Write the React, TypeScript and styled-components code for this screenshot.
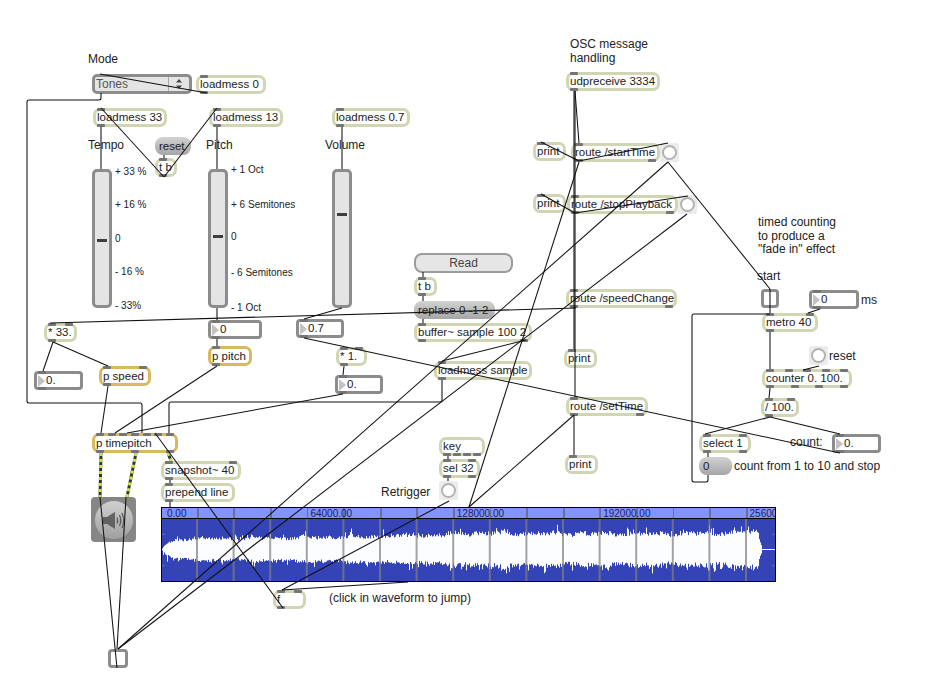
import React from "react";
import styled, { createGlobalStyle } from "styled-components";

const GlobalStyle = createGlobalStyle`
  html, body {
    margin: 0;
    padding: 0;
    background: #fff;
  }
  body {
    font-family: "Liberation Sans", Arial, sans-serif;
    font-size: 12px;
    color: #222;
  }
`;

interface BoxProps {
  $x: number;
  $y: number;
  $w?: number;
  $h?: number;
}

// everything on the patcher canvas sits at its own coordinates
const Placed = styled.div.attrs<BoxProps>((p) => ({
  style: { left: p.$x, top: p.$y, width: p.$w, height: p.$h },
}))<BoxProps>`
  position: absolute;
  box-sizing: border-box;
`;

const Canvas = styled.div`
  position: relative;
  width: 928px;
  height: 681px;
  overflow: hidden;
  background: #fff;
`;

const ObjectBox = styled(Placed)`
  display: flex;
  align-items: center;
  padding-left: 1px;
  border: 3px solid #d0d6b4;
  border-radius: 7px;
  background: #fff;
  font-size: 11.5px;
  white-space: nowrap;
  line-height: 13px;
`;

const SubpatchBox = styled(ObjectBox)`
  border-color: #d8b95e;
`;

const NumberBox = styled(ObjectBox)`
  padding-left: 0;
  border-color: #8c8c8c;
  border-radius: 4px;
  &::before {
    content: "";
    flex: none;
    width: 0;
    height: 0;
    margin: 0 1px;
    border-top: 6px solid transparent;
    border-bottom: 6px solid transparent;
    border-left: 7px solid #c2c2c2;
  }
`;

const MessageBox = styled(Placed)`
  display: flex;
  align-items: center;
  padding-left: 4px;
  border-radius: 8px;
  background: linear-gradient(#d2d2d2, #a6a6a6);
  font-size: 11.5px;
  white-space: nowrap;
`;

const ReadButton = styled(Placed)`
  display: flex;
  align-items: center;
  justify-content: center;
  border: 2px solid #9c9c9c;
  border-radius: 8px;
  background: #e6e6e6;
  color: #444;
`;

const Menu = styled(Placed)`
  display: flex;
  align-items: center;
  border: 3px solid #8c8c8c;
  border-radius: 5px;
  background: #e4e4e4;
  color: #555;
`;

const MenuLabel = styled.span`
  flex: 1;
  padding-left: 1px;
`;

const MenuArrows = styled.svg`
  flex: none;
  width: 20px;
  height: 14px;
  border-left: 1px solid #aaa;
`;

const Slider = styled(Placed)`
  border: 3px solid #8c8c8c;
  border-radius: 5px;
  background: #e4e4e4;
`;

const SliderThumb = styled.div.attrs<{ $at: number }>((p) => ({
  style: { top: p.$at },
}))<{ $at: number }>`
  position: absolute;
  left: 2px;
  right: 2px;
  height: 3px;
  background: #3e3e3e;
`;

const BangBox = styled(Placed)`
  display: flex;
  align-items: center;
  justify-content: center;
  width: 19px;
  height: 19px;
  border-radius: 2px;
  background: #ececec;
`;

const BangRing = styled.div`
  box-sizing: border-box;
  width: 15px;
  height: 15px;
  border: 2px solid #b2b2b2;
  border-radius: 50%;
  background: #fff;
`;

const Toggle = styled(Placed)`
  border: 3px solid #8c8c8c;
  border-radius: 4px;
  background: #fff;
`;

const Comment = styled(Placed)`
  white-space: pre;
  line-height: 13.5px;
`;

const ScaleLabel = styled(Placed)`
  font-size: 10px;
  line-height: 12px;
  white-space: nowrap;
`;

const PortRow = styled.div<{ $side: "top" | "bottom" }>`
  position: absolute;
  left: 1px;
  right: 1px;
  ${(p) => (p.$side === "top" ? "top: -3px;" : "bottom: -3px;")}
  display: flex;
  justify-content: space-between;
`;

const Port = styled.span`
  width: 8px;
  height: 3px;
  border-radius: 1px;
  background: #757575;
`;

const DacBox = styled(Placed)`
  display: flex;
  align-items: center;
  justify-content: center;
  border-radius: 4px;
  background: #868686;
`;

const Wave = styled(Placed)`
  display: flex;
  flex-direction: column;
  border: 1px solid #000;
  background: #3444b6;
`;

const WaveRuler = styled.div`
  display: flex;
  flex: none;
  height: 10px;
  overflow: hidden;
  border-bottom: 1px solid #000;
  background-color: #8494fe;
  background-image: repeating-linear-gradient(
    to right,
    transparent 0,
    transparent 34.8px,
    #6a6f99 34.8px,
    #6a6f99 36.6px
  );
  font-size: 10px;
  line-height: 11px;
  color: #1c2050;
`;

const RulerLabel = styled.span`
  flex: none;
  width: 146.4px;
  padding-left: 2px;
  box-sizing: border-box;
  &:first-child {
    padding-left: 5px;
  }
`;

const WaveBody = styled.svg`
  display: block;
  flex: 1;
  width: 100%;
`;

const WireLayer = styled.svg`
  position: absolute;
  left: 0;
  top: 0;
  z-index: 5;
  pointer-events: none;
`;

const Wire = styled.path`
  fill: none;
  stroke: #111;
  stroke-width: 1.05;
`;

const SignalWire = styled.path`
  fill: none;
  stroke: #333;
  stroke-width: 3;
`;

const SignalDash = styled.path`
  fill: none;
  stroke: #c8e63c;
  stroke-width: 3;
  stroke-dasharray: 3 3;
`;

interface NodeSpec {
  text: string;
  x: number;
  y: number;
  w: number;
  h?: number;
  in?: number;
  out?: number;
}

const objects: NodeSpec[] = [
  { text: "loadmess 0", x: 196, y: 75, w: 70, in: 1, out: 1 },
  { text: "loadmess 33", x: 93, y: 108, w: 74, in: 1, out: 1 },
  { text: "loadmess 13", x: 209, y: 108, w: 74, in: 1, out: 1 },
  { text: "loadmess 0.7", x: 332, y: 108, w: 78, in: 1, out: 1 },
  { text: "t b", x: 155, y: 158, w: 22, in: 1, out: 1 },
  { text: "* 33.", x: 44, y: 323, w: 33, in: 2, out: 1 },
  { text: "* 1.", x: 336, y: 347, w: 31, in: 2, out: 1 },
  { text: "t b", x: 414, y: 277, w: 23, in: 1, out: 1 },
  { text: "buffer~ sample 100 2", x: 414, y: 323, w: 118, in: 1, out: 2 },
  { text: "loadmess sample", x: 434, y: 361, w: 98, in: 1, out: 1 },
  { text: "udpreceive 3334", x: 566, y: 72, w: 94, in: 1, out: 1 },
  { text: "print", x: 533, y: 142, w: 33, in: 1 },
  { text: "print", x: 533, y: 194, w: 33, in: 1 },
  { text: "route /startTime", x: 571, y: 143, w: 89, in: 1, out: 2 },
  { text: "route /stopPlayback", x: 567, y: 195, w: 111, in: 1, out: 2 },
  { text: "route /speedChange", x: 566, y: 289, w: 111, in: 1, out: 2 },
  { text: "print", x: 564, y: 349, w: 33, in: 1 },
  { text: "route /setTime", x: 566, y: 397, w: 82, in: 1, out: 2 },
  { text: "print", x: 565, y: 455, w: 33, in: 1 },
  { text: "key", x: 439, y: 437, w: 46, out: 4 },
  { text: "sel 32", x: 439, y: 459, w: 41, in: 2, out: 2 },
  { text: "snapshot~ 40", x: 161, y: 461, w: 80, in: 2, out: 1 },
  { text: "prepend line", x: 161, y: 483, w: 74, in: 1, out: 1 },
  { text: "f", x: 273, y: 590, w: 33, in: 2, out: 1 },
  { text: "metro 40", x: 762, y: 313, w: 56, in: 2, out: 1 },
  { text: "counter 0. 100.", x: 762, y: 369, w: 90, in: 5, out: 4 },
  { text: "/ 100.", x: 761, y: 398, w: 38, in: 2, out: 1 },
  { text: "select 1", x: 699, y: 434, w: 52, in: 2, out: 2 },
];

const subpatches: NodeSpec[] = [
  { text: "p speed", x: 99, y: 366, w: 52, h: 20, in: 2, out: 1 },
  { text: "p pitch", x: 208, y: 346, w: 44, h: 20, in: 1, out: 1 },
  { text: "p timepitch", x: 92, y: 433, w: 86, h: 20, in: 7, out: 3 },
];

const numbers: NodeSpec[] = [
  { text: "0.", x: 34, y: 371, w: 49, in: 1, out: 1 },
  { text: "0", x: 208, y: 320, w: 54, in: 1, out: 1 },
  { text: "0.7", x: 296, y: 319, w: 48, in: 1, out: 1 },
  { text: "0.", x: 335, y: 375, w: 48, in: 1, out: 1 },
  { text: "0", x: 809, y: 290, w: 50, in: 1, out: 1 },
  { text: "0.", x: 832, y: 434, w: 49, in: 1, out: 1 },
];

const messages: NodeSpec[] = [
  { text: "reset", x: 155, y: 137, w: 36, h: 18 },
  { text: "replace 0 -1 2", x: 414, y: 301, w: 81, h: 18 },
  { text: "0", x: 699, y: 457, w: 33, h: 18 },
];

const bangs = [
  { x: 660, y: 143 },
  { x: 678, y: 195 },
  { x: 439, y: 481 },
  { x: 809, y: 346 },
];

const sliders = [
  { x: 92, thumb: 67 },
  { x: 208, thumb: 63 },
  { x: 332, thumb: 41 },
];

const comments = [
  { text: "Mode", x: 88, y: 53 },
  { text: "Tempo", x: 88, y: 139 },
  { text: "Pitch", x: 206, y: 139 },
  { text: "Volume", x: 325, y: 139 },
  { text: "OSC message\nhandling", x: 570, y: 38 },
  { text: 'timed counting\nto produce a\n"fade in" effect', x: 758, y: 216 },
  { text: "start", x: 757, y: 270 },
  { text: "ms", x: 861, y: 294 },
  { text: "reset", x: 829, y: 350 },
  { text: "count:", x: 790, y: 436 },
  { text: "count from 1 to 10 and stop", x: 734, y: 460 },
  { text: "Retrigger", x: 381, y: 486 },
  { text: "(click in waveform to jump)", x: 329, y: 592 },
];

const scaleLabels = [
  { text: "+ 33 %", x: 115, y: 166 },
  { text: "+ 16 %", x: 115, y: 199 },
  { text: "0", x: 115, y: 233 },
  { text: "- 16 %", x: 115, y: 266 },
  { text: "- 33%", x: 115, y: 300 },
  { text: "+ 1 Oct", x: 231, y: 164 },
  { text: "+ 6 Semitones", x: 231, y: 199 },
  { text: "0", x: 231, y: 231 },
  { text: "- 6 Semitones", x: 231, y: 267 },
  { text: "- 1 Oct", x: 231, y: 302 },
];

const wires = [
  "M100 74L207 93",
  "M101 93V98Q101 100 99 100H29Q27 100 27 102V401Q27 403 29 403H140Q142 403 142 405V433",
  "M101 127V169",
  "M217 127V169",
  "M342 127V169",
  "M164 155V158",
  "M164 177L101 108",
  "M164 177L217 108",
  "M576 308L50 323",
  "M342 308L304 319",
  "M217 308V320",
  "M217 339V346",
  "M53 342L43 371",
  "M53 342L108 366",
  "M108 386L101 433",
  "M217 366L115 433",
  "M343 394L127 433",
  "M442 380V400Q442 402 440 402H171Q169 402 169 404V433",
  "M304 338L840 453",
  "M344 366L343 375",
  "M423 272V277",
  "M423 296V301",
  "M423 319V323",
  "M442 361L526 340",
  "M575 91L579 143",
  "M575 91V397",
  "M574 91V349",
  "M574 415V455",
  "M541 142L577 160",
  "M575 159L579 161L668 143",
  "M541 194L575 213",
  "M575 213L688 196",
  "M668 162L770 289",
  "M668 162L118 649",
  "M687 214L118 649",
  "M579 162L469 507",
  "M574 415L469 507",
  "M449 501L282 590",
  "M408 582L282 590",
  "M283 608L155 433",
  "M100 497L117 668",
  "M126 497L117 649",
  "M170 480V483",
  "M170 502V507",
  "M448 456V459",
  "M448 478V481",
  "M770 289V313",
  "M820 309L808 313",
  "M770 332V369",
  "M819 366L803 370",
  "M770 388L769 398",
  "M770 417L705 434",
  "M770 417L840 434",
  "M708 453V457",
  "M708 475V480Q708 482 706 482H694Q692 482 692 480V316Q692 314 694 314H770",
];

const signals = ["M101 453L100 497", "M136 453L127 497", "M168 453L171 461"];

// amplitude of the loaded sample over the width of the waveform view
const envelope: [number, number][] = [
  [0, 1], [3, 6], [9, 10], [14, 12], [29, 14], [69, 14], [139, 15], [179, 16],
  [239, 17], [279, 19], [319, 21], [399, 20], [459, 20], [539, 20], [589, 22],
  [596, 22], [597, 12], [599, 5], [600, 0],
];

function ampAt(x: number): number {
  for (let i = 1; i < envelope.length; i++) {
    if (x <= envelope[i][0]) {
      const [x0, a0] = envelope[i - 1];
      const [x1, a1] = envelope[i];
      return a0 + ((a1 - a0) * (x - x0)) / (x1 - x0);
    }
  }
  return 0;
}

function buildWave(): string {
  let seed = 40213;
  const rnd = () => {
    seed = (seed * 1664525 + 1013904223) % 4294967296;
    return seed / 4294967296;
  };
  let d = "";
  for (let x = 0; x < 600; x++) {
    const a = ampAt(x);
    const swell = 1 + 0.1 * Math.sin(x / 17) * Math.sin(x / 5.3);
    const up = a * swell * (0.68 + rnd() * 0.24) + (rnd() > 0.88 ? rnd() * 6 : 0);
    const down = a * swell * (0.66 + rnd() * 0.24) + (rnd() > 0.88 ? rnd() * 7 : 0);
    d += `M${x + 0.5} ${(31 - up).toFixed(1)}V${(31 + down).toFixed(1)}`;
  }
  return d;
}

const waveform = buildWave();
const gridLines = Array.from({ length: 16 }, (_, i) => 35 + i * 36.6);

function Ports({ side, count }: { side: "top" | "bottom"; count?: number }) {
  if (!count) return null;
  return (
    <PortRow $side={side}>
      {Array.from({ length: count }, (_, i) => (
        <Port key={i} />
      ))}
    </PortRow>
  );
}

function placedNode(Box: typeof ObjectBox, n: NodeSpec, i: number) {
  return (
    <Box key={i} $x={n.x} $y={n.y} $w={n.w} $h={n.h ?? 19}>
      {n.text}
      <Ports side="top" count={n.in} />
      <Ports side="bottom" count={n.out} />
    </Box>
  );
}

export default function App(): JSX.Element {
  return (
    <Canvas>
      <GlobalStyle />

      {comments.map((c, i) => (
        <Comment key={i} $x={c.x} $y={c.y}>
          {c.text}
        </Comment>
      ))}
      {scaleLabels.map((c, i) => (
        <ScaleLabel key={i} $x={c.x} $y={c.y}>
          {c.text}
        </ScaleLabel>
      ))}

      <Menu $x={92} $y={74} $w={100} $h={20}>
        <MenuLabel>Tones</MenuLabel>
        <MenuArrows viewBox="0 0 20 14">
          <path d="M10 2L13 5.5H7Z M10 12L7 8.5H13Z" fill="#444" />
        </MenuArrows>
      </Menu>

      {sliders.map((s) => (
        <Slider key={s.x} $x={s.x} $y={169} $w={20} $h={139}>
          <SliderThumb $at={s.thumb} />
        </Slider>
      ))}

      <ReadButton $x={414} $y={253} $w={99} $h={20}>
        Read
      </ReadButton>

      {objects.map((n, i) => placedNode(ObjectBox, n, i))}
      {subpatches.map((n, i) => placedNode(SubpatchBox, n, i))}
      {numbers.map((n, i) => placedNode(NumberBox, n, i))}
      {messages.map((m, i) => (
        <MessageBox key={i} $x={m.x} $y={m.y} $w={m.w} $h={m.h}>
          {m.text}
        </MessageBox>
      ))}
      {bangs.map((b, i) => (
        <BangBox key={i} $x={b.x} $y={b.y}>
          <BangRing />
        </BangBox>
      ))}

      <Toggle $x={761} $y={289} $w={18} $h={19} />
      <Toggle $x={108} $y={649} $w={20} $h={19} />

      <DacBox $x={91} $y={497} $w={45} $h={45}>
        <svg width="38" height="38" viewBox="0 0 38 38">
          <defs>
            <linearGradient id="dacFace" x1="0" y1="0" x2="0" y2="1">
              <stop offset="0" stopColor="#cfcfcf" />
              <stop offset="1" stopColor="#a0a0a0" />
            </linearGradient>
          </defs>
          <circle cx="19" cy="19" r="19" fill="url(#dacFace)" />
          <path d="M8 16H12L20 11V28L12 23H8Z" fill="#626262" />
          <path
            d="M22 16.5Q23.5 19.5 22 22.5M24.5 14Q27 19.5 24.5 25M27 12Q30.5 19.5 27 27"
            fill="none"
            stroke="#5c5c5c"
            strokeWidth="1.3"
          />
        </svg>
      </DacBox>

      <Wave $x={161} $y={507} $w={615} $h={75}>
        <WaveRuler>
          {["0.00", "64000.00", "128000.00", "192000.00", "25600"].map((t) => (
            <RulerLabel key={t}>{t}</RulerLabel>
          ))}
        </WaveRuler>
        <WaveBody viewBox="0 0 613 63" preserveAspectRatio="none">
          <path d={waveform} stroke="#fff" strokeWidth="1" fill="none" />
          <path d="M599 31H613" stroke="#fff" strokeWidth="1" />
          {gridLines.map((x) => (
            <path key={x} d={`M${x} 0V63`} stroke="#808080" strokeOpacity="0.72" strokeWidth="2" />
          ))}
          <path d="M0 15.5H3M0 47.5H3M610 15.5H613M610 47.5H613" stroke="#6a74b8" strokeWidth="1" />
        </WaveBody>
      </Wave>

      <WireLayer width="928" height="681" viewBox="0 0 928 681">
        {signals.map((d) => (
          <React.Fragment key={d}>
            <SignalWire d={d} />
            <SignalDash d={d} />
          </React.Fragment>
        ))}
        {wires.map((d) => (
          <Wire key={d} d={d} />
        ))}
      </WireLayer>
    </Canvas>
  );
}
